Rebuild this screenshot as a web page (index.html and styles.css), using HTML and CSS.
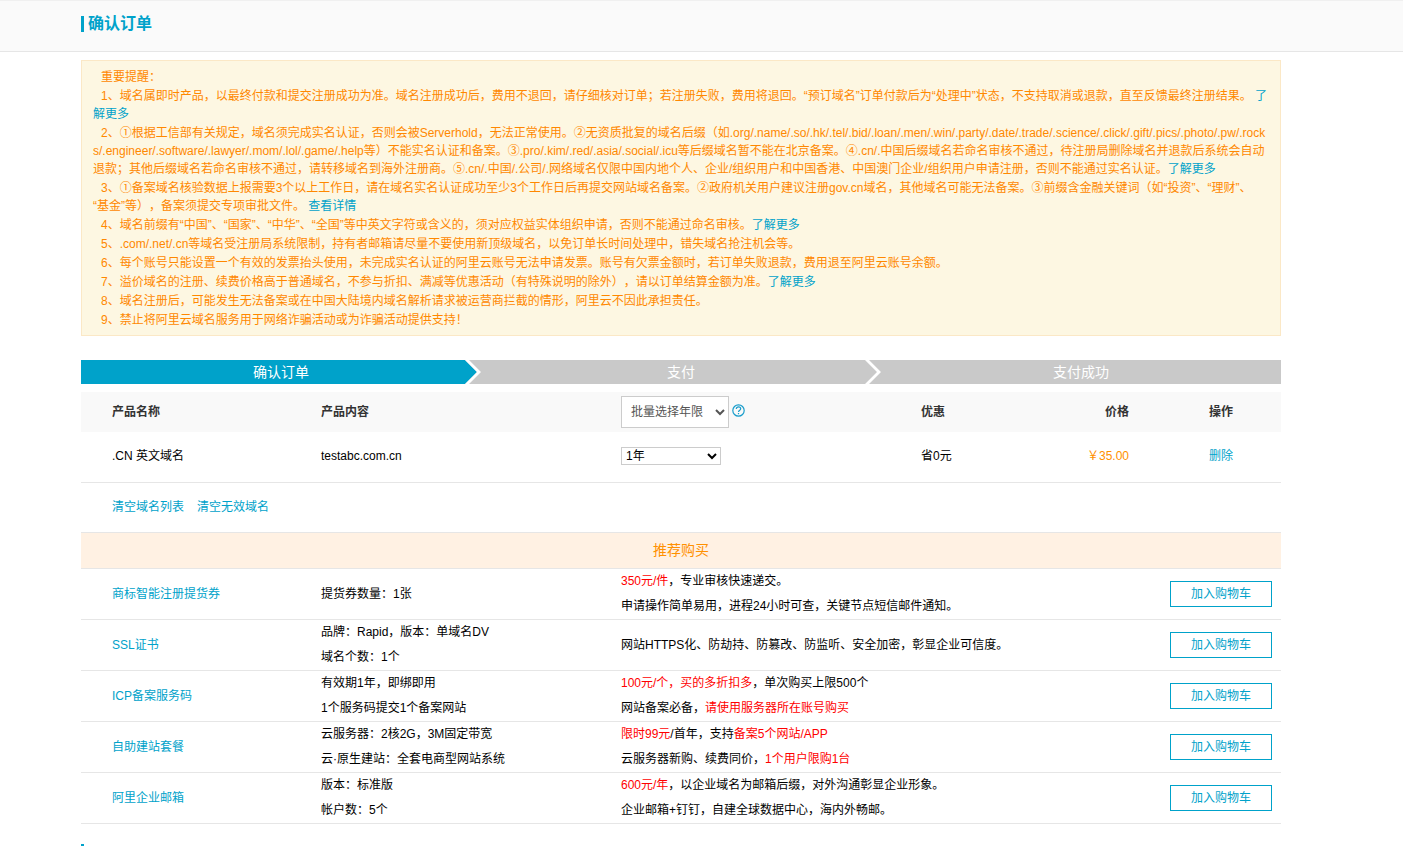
FILE: index.html
```html
<!DOCTYPE html>
<html lang="zh-CN">
<head>
<meta charset="utf-8">
<meta name="viewport" content="width=device-width, initial-scale=1">
<title>确认订单</title>
<link rel="stylesheet" href="styles.css">
</head>
<body>
<header class="page-header">
  <h1 class="page-title">确认订单</h1>
</header>
<main class="content">
  <section class="notice">
    <p>重要提醒：</p>
    <p>1、域名属即时产品，以最终付款和提交注册成功为准。域名注册成功后，费用不退回，请仔细核对订单；若注册失败，费用将退回。“预订域名”订单付款后为“处理中”状态，不支持取消或退款，直至反馈最终注册结果。 <a href="#">了解更多</a></p>
    <p>2、①根据工信部有关规定，域名须完成实名认证，否则会被Serverhold，无法正常使用。②无资质批复的域名后缀（如.org/.name/.so/.hk/.tel/.bid/.loan/.men/.win/.party/.date/.trade/.science/.click/.gift/.pics/.photo/.pw/.rocks/.engineer/.software/.lawyer/.mom/.lol/.game/.help等）不能实名认证和备案。③.pro/.kim/.red/.asia/.social/.icu等后缀域名暂不能在北京备案。④.cn/.中国后缀域名若命名审核不通过，待注册局删除域名并退款后系统会自动退款；其他后缀域名若命名审核不通过，请转移域名到海外注册商。⑤.cn/.中国/.公司/.网络域名仅限中国内地个人、企业/组织用户和中国香港、中国澳门企业/组织用户申请注册，否则不能通过实名认证。<a href="#">了解更多</a></p>
    <p>3、①备案域名核验数据上报需要3个以上工作日，请在域名实名认证成功至少3个工作日后再提交网站域名备案。②政府机关用户建议注册gov.cn域名，其他域名可能无法备案。③前缀含金融关键词（如“投资”、“理财”、<span class="keep">“基金”</span>等），备案须提交专项审批文件。 <a href="#">查看详情</a></p>
    <p>4、域名前缀有“中国”、“国家”、“中华”、“全国”等中英文字符或含义的，须对应权益实体组织申请，否则不能通过命名审核。<a href="#">了解更多</a></p>
    <p>5、.com/.net/.cn等域名受注册局系统限制，持有者邮箱请尽量不要使用新顶级域名，以免订单长时间处理中，错失域名抢注机会等。</p>
    <p>6、每个账号只能设置一个有效的发票抬头使用，未完成实名认证的阿里云账号无法申请发票。账号有欠票金额时，若订单失败退款，费用退至阿里云账号余额。</p>
    <p>7、溢价域名的注册、续费价格高于普通域名，不参与折扣、满减等优惠活动（有特殊说明的除外），请以订单结算金额为准。<a href="#">了解更多</a></p>
    <p>8、域名注册后，可能发生无法备案或在中国大陆境内域名解析请求被运营商拦截的情形，阿里云不因此承担责任。</p>
    <p>9、禁止将阿里云域名服务用于网络诈骗活动或为诈骗活动提供支持！</p>
  </section>

  <ol class="steps">
    <li class="step step-active">确认订单
      <svg class="step-arrow" width="16" height="24" viewBox="0 0 16 24" aria-hidden="true"><path d="M0 0H16V24H0z" fill="#c9c9c9"/><path d="M0 0L12 12L0 24z" fill="#00a2ca"/><path d="M0 0H4L16 12L4 24H0L12 12z" fill="#fff"/></svg>
    </li>
    <li class="step">支付
      <svg class="step-arrow" width="16" height="24" viewBox="0 0 16 24" aria-hidden="true"><path d="M0 0H4L16 12L4 24H0L12 12z" fill="#fff"/></svg>
    </li>
    <li class="step">支付成功</li>
  </ol>

  <table class="order">
    <colgroup>
      <col class="col-name"><col class="col-wide"><col class="col-wide"><col class="col-small"><col class="col-small"><col class="col-small">
    </colgroup>
    <thead>
      <tr>
        <th>产品名称</th>
        <th>产品内容</th>
        <th>
          <div class="batch">
            <select class="batch-select" aria-label="批量选择年限"><option>批量选择年限</option></select>
            <svg class="help" width="13" height="13" viewBox="0 0 13 13" fill="none" stroke="#1a9dcb" role="img" aria-label="帮助"><circle cx="6.5" cy="6.5" r="5.7" stroke-width="1.2"/><path stroke-width="1.2" d="M4.3 5C4.3 3.6 5.2 2.9 6.5 2.9S8.7 3.7 8.7 4.8C8.7 6.2 6.5 6.2 6.5 7.9M6.5 8.9V10.2"/></svg>
          </div>
        </th>
        <th>优惠</th>
        <th class="price">价格</th>
        <th class="action">操作</th>
      </tr>
    </thead>
    <tbody>
      <tr class="item">
        <td>.CN 英文域名</td>
        <td>testabc.com.cn</td>
        <td><select class="year-select" aria-label="年限"><option>1年</option></select></td>
        <td>省0元</td>
        <td class="price">￥35.00</td>
        <td class="action"><a href="#">删除</a></td>
      </tr>
      <tr class="clear">
        <td colspan="6"><div class="clear-links"><a href="#">清空域名列表</a><a href="#">清空无效域名</a></div></td>
      </tr>
      <tr class="recommend-title">
        <td colspan="6">推荐购买</td>
      </tr>
      <tr class="recommend">
        <td><a href="#">商标智能注册提货券</a></td>
        <td>提货券数量：1张</td>
        <td colspan="3"><em>350元/件</em>，专业审核快速递交。<br>申请操作简单易用，进程24小时可查，关键节点短信邮件通知。</td>
        <td class="action"><button class="add" type="button">加入购物车</button></td>
      </tr>
      <tr class="recommend">
        <td><a href="#">SSL证书</a></td>
        <td>品牌：Rapid，版本：单域名DV<br>域名个数：1个</td>
        <td colspan="3">网站HTTPS化、防劫持、防篡改、防监听、安全加密，彰显企业可信度。</td>
        <td class="action"><button class="add" type="button">加入购物车</button></td>
      </tr>
      <tr class="recommend">
        <td><a href="#">ICP备案服务码</a></td>
        <td>有效期1年，即绑即用<br>1个服务码提交1个备案网站</td>
        <td colspan="3"><em>100元/个，买的多折扣多</em>，单次购买上限500个<br>网站备案必备，<em>请使用服务器所在账号购买</em></td>
        <td class="action"><button class="add" type="button">加入购物车</button></td>
      </tr>
      <tr class="recommend">
        <td><a href="#">自助建站套餐</a></td>
        <td>云服务器：2核2G，3M固定带宽<br>云·原生建站：全套电商型网站系统</td>
        <td colspan="3"><em>限时99元</em>/首年，支持<em>备案5个网站/APP</em><br>云服务器新购、续费同价，<em>1个用户限购1台</em></td>
        <td class="action"><button class="add" type="button">加入购物车</button></td>
      </tr>
      <tr class="recommend">
        <td><a href="#">阿里企业邮箱</a></td>
        <td>版本：标准版<br>帐户数：5个</td>
        <td colspan="3"><em>600元/年</em>，以企业域名为邮箱后缀，对外沟通彰显企业形象。<br>企业邮箱+钉钉，自建全球数据中心，海内外畅邮。</td>
        <td class="action"><button class="add" type="button">加入购物车</button></td>
      </tr>
    </tbody>
  </table>
  <div class="next-section"></div>
</main>
</body>
</html>
```
FILE: styles.css
```css
* {
  box-sizing: border-box;
}

body {
  margin: 0;
  background: #fff;
  color: #000;
  font: 12px/18px "Liberation Sans", "Noto Sans CJK SC", sans-serif;
  text-spacing-trim: space-all;
}

a {
  color: #00a2ca;
  text-decoration: none;
}

.page-header {
  padding: 15px 122px 19px 81px;
  background: #fafafa;
  border-top: 1px solid #f0f0f0;
  border-bottom: 1px solid #e6e6e6;
}

.page-title {
  margin: 0;
  padding: 0 0 0 4px;
  border-left: 3px solid #00a2ca;
  color: #00a2ca;
  font-size: 16px;
  font-weight: 700;
  line-height: 16px;
}

.content {
  padding: 8px 122px 0 81px;
}

.notice {
  padding: 7px 11px 5px;
  background: #fdf7e2;
  border: 1px solid #fbe8c6;
  color: #f80;
  word-break: break-all;
}

.notice p {
  margin: 0 0 1px;
  text-indent: 8px;
}

.keep {
  white-space: nowrap;
}

.steps {
  display: grid;
  grid-template-columns: repeat(3, 1fr);
  margin: 24px 0 8px;
  padding: 0;
  background: #c9c9c9;
  color: #fff;
  font-size: 14px;
  line-height: 24px;
  list-style: none;
  text-align: center;
}

.step {
  position: relative;
}

.step-active {
  background: #00a2ca;
}

.step-arrow {
  position: absolute;
  top: 0;
  right: 0;
}

.order {
  width: 100%;
  border-collapse: separate;
  border-spacing: 0;
  table-layout: fixed;
}

.col-name {
  width: 20%;
}

.col-wide {
  width: 25%;
}

.col-small {
  width: 10%;
}

.order th,
.order td {
  padding: 0;
  text-align: left;
}

.order th:first-child,
.order td:first-child {
  padding-left: 31px;
}

.order th {
  height: 40px;
  background: #f9f9f9;
  color: #333;
  font-weight: 700;
}

.order td {
  border-bottom: 1px solid #e6e6e6;
}

.order .price {
  padding-right: 32px;
  text-align: right;
}

.order .action {
  text-align: center;
}

.batch {
  display: flex;
  align-items: center;
  gap: 3px;
}

.batch-select,
.year-select {
  background: #fff;
  border: 1px solid #ccc;
  border-radius: 0;
  font: inherit;
}

.batch-select {
  width: 108px;
  height: 32px;
  padding: 0 0 0 5px;
  color: #555;
  font-weight: 400;
}

.year-select {
  display: block;
  width: 100px;
  height: 18px;
  padding: 0;
  color: #000;
}

.help {
  margin-bottom: 4px;
}

.order .item td {
  height: 51px;
  padding-bottom: 2px;
}

.item .price {
  color: #ff9000;
}

.order .clear td {
  height: 50px;
  padding-bottom: 2px;
}

.clear-links {
  display: flex;
  gap: 13px;
}

.order .recommend-title td {
  height: 36px;
  padding: 0 0 2px;
  background: #fff1e3;
  color: #ff9000;
  font-size: 14px;
  text-align: center;
}

.recommend td {
  height: 51px;
  line-height: 25px;
}

.recommend em {
  color: #f00;
  font-style: normal;
}

.add {
  width: 102px;
  height: 26px;
  padding: 0;
  background: #fff;
  border: 1px solid #00a2ca;
  color: #00a2ca;
  font: inherit;
  line-height: 24px;
  vertical-align: middle;
}

.next-section {
  width: 3px;
  height: 2px;
  margin-top: 20px;
  background: #00a2ca;
}
```
